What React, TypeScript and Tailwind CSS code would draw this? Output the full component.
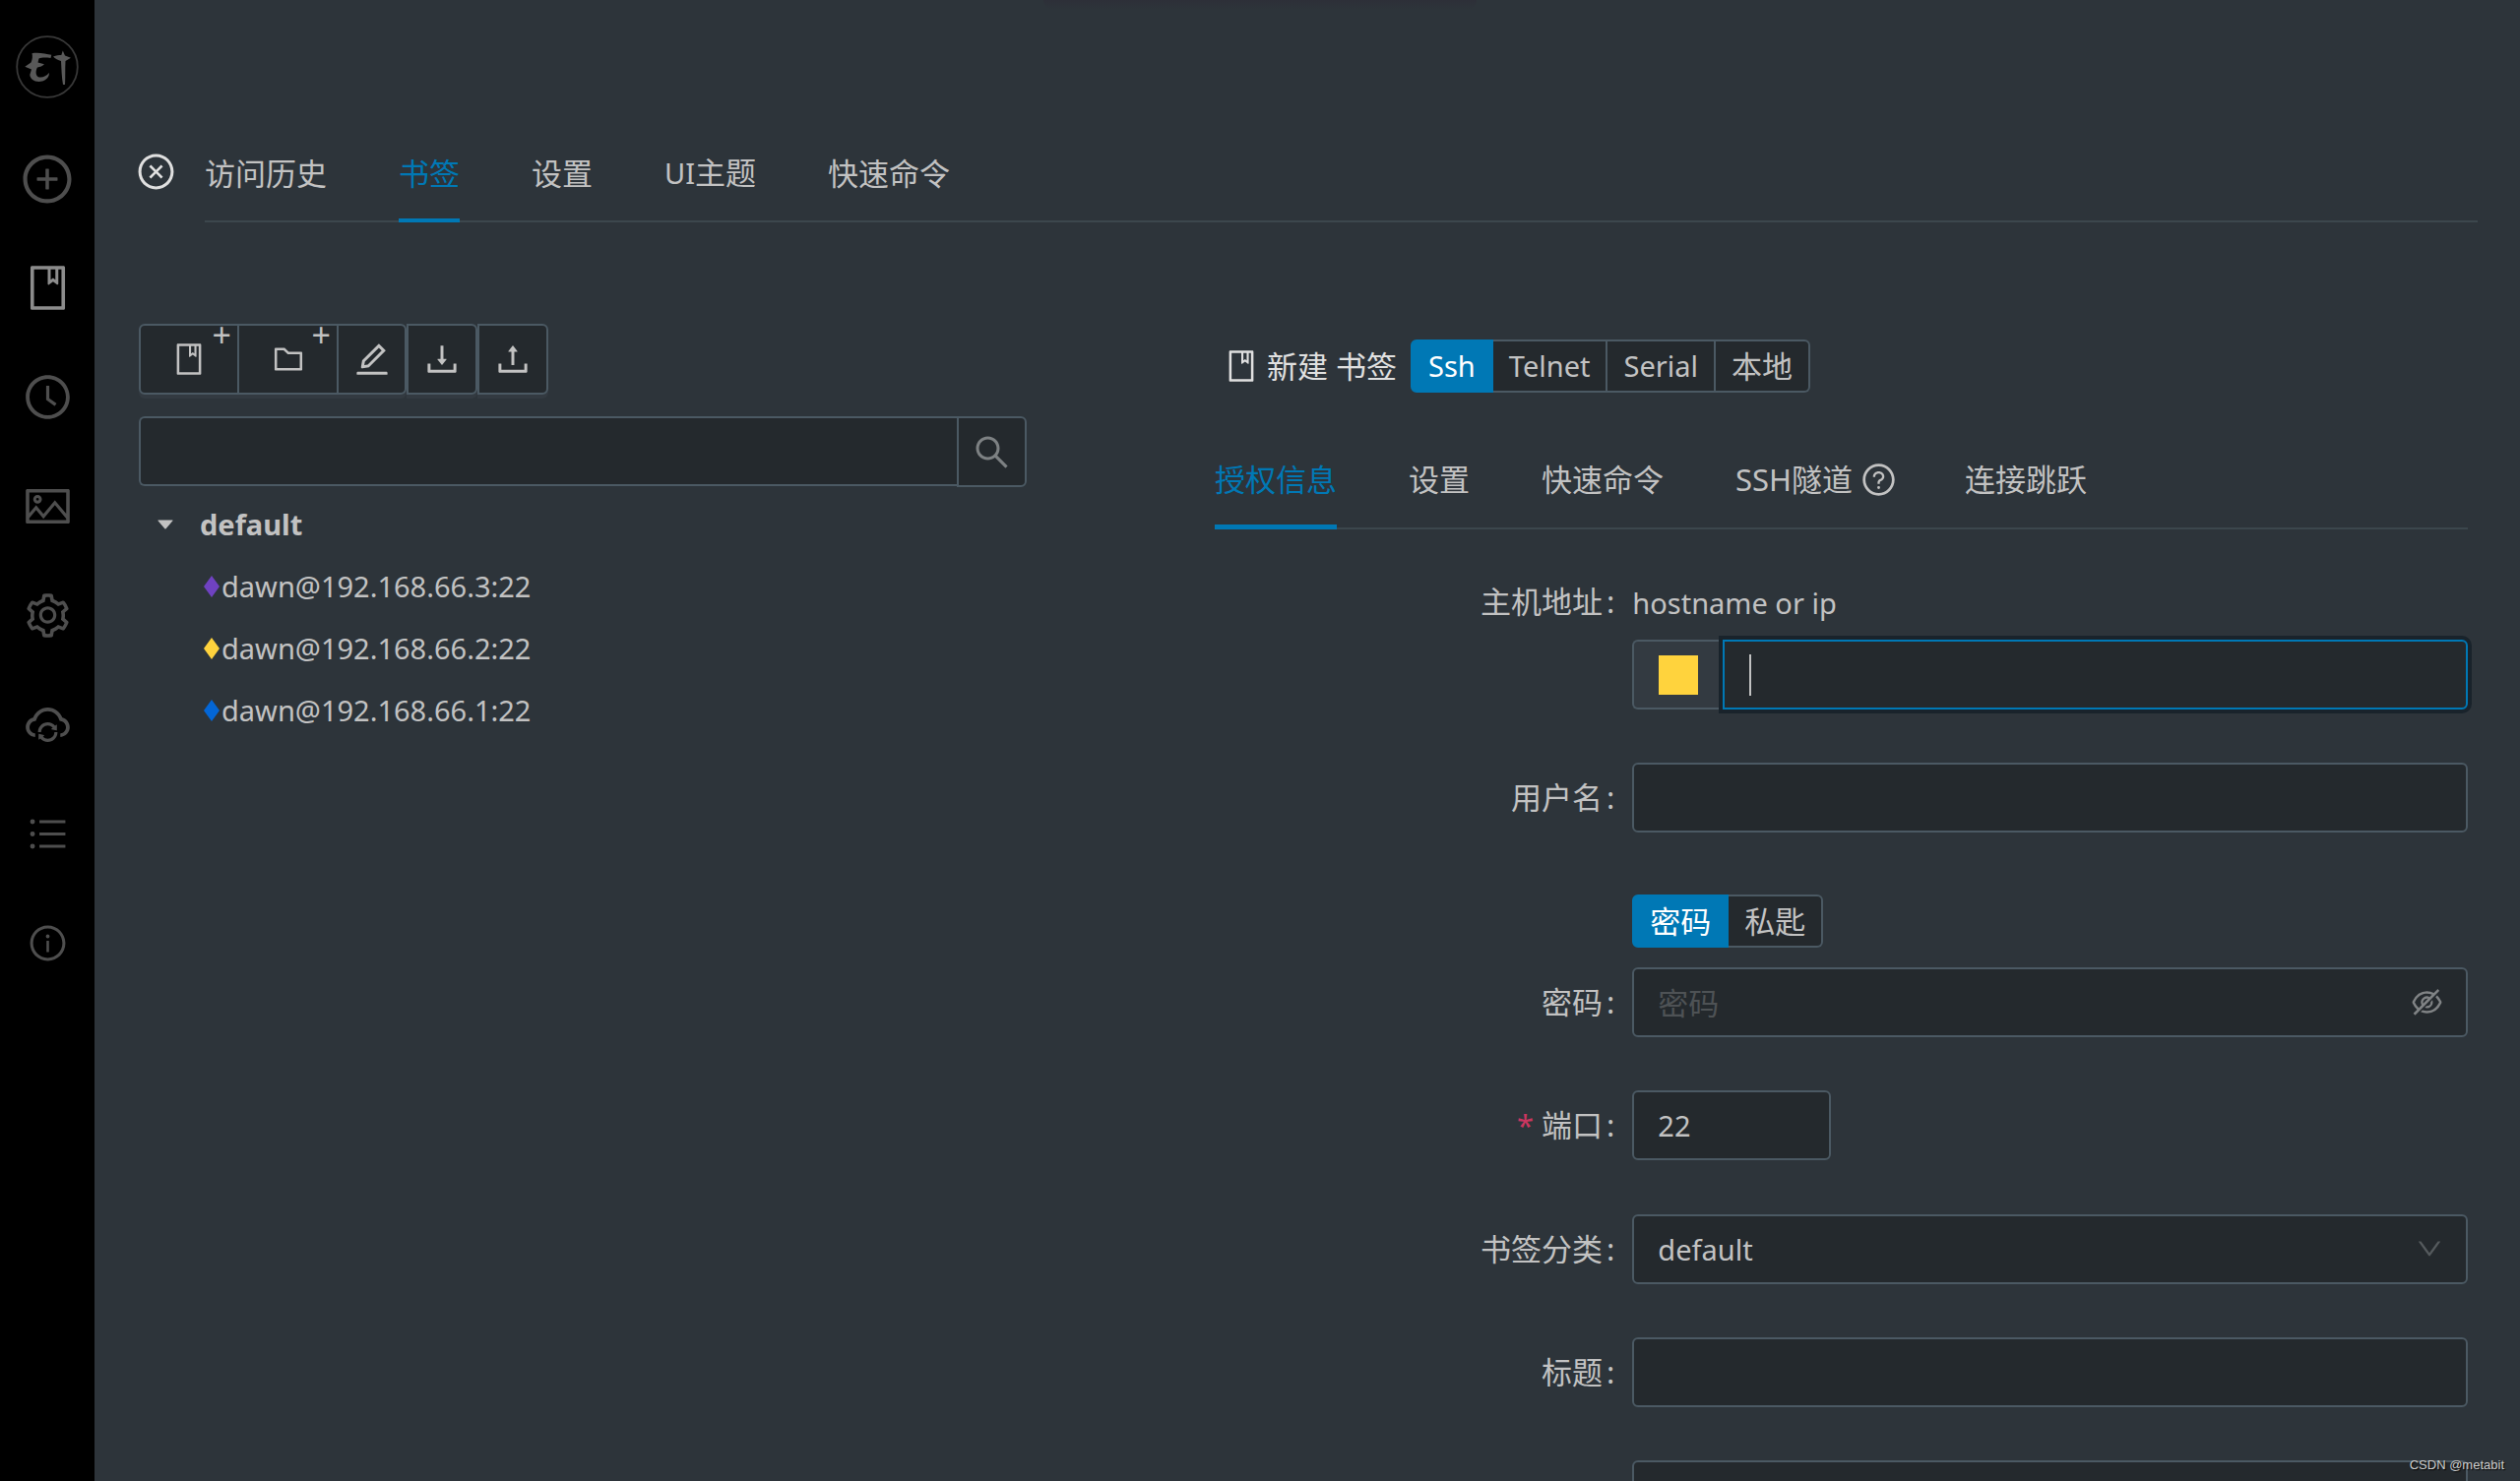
import type { ComponentType, ReactNode } from "react";
import {
  AiFillCaretDown,
  AiOutlineBook,
  AiOutlineClockCircle,
  AiOutlineCloseCircle,
  AiOutlineCloudSync,
  AiOutlineDown,
  AiOutlineDownload,
  AiOutlineEdit,
  AiOutlineEyeInvisible,
  AiOutlineFolder,
  AiOutlineInfoCircle,
  AiOutlinePicture,
  AiOutlinePlusCircle,
  AiOutlineQuestionCircle,
  AiOutlineSearch,
  AiOutlineSetting,
  AiOutlineUnorderedList,
  AiOutlineUpload,
} from "react-icons/ai";

type IconType = ComponentType<{ className?: string }>;

const field =
  "h-[71px] w-full rounded-md border-2 border-[#4b5963] bg-[#24292d] px-6 text-[#c2c2c2] outline-none placeholder:text-[#4e5255]";

function Logo() {
  return (
    <svg viewBox="0 0 64 64" className="size-16" aria-hidden="true">
      <circle cx="32" cy="32" r="30.8" fill="none" stroke="#383838" strokeWidth="1.8" />
      <path
        fill="#585858"
        d="M16.500 18.200 C22 16.800 31 18.500 36.300 19.800 L35.500 23 C30 22.300 26 22.500 23.500 23.500 L22.500 27.500 L29 29.200 C27 31 25 32 22 32.500 C20 36 20 40.500 23 42.300 C27 43.300 31 41.500 33.800 38 C34.500 41.500 31 45.500 27 46.500 C20 48 14.800 45 14.300 40 L16 34.500 L9.300 31.700 L15.500 27.500 C17 24 17.200 21 16.500 18.200 Z"
      />
      <path
        fill="#585858"
        d="M38 21.500 C41 20 44 20.200 46.300 20 L47.800 15.500 L50 20.500 L56 22.800 L50.500 26 C50 34 50.500 42 50 50 L48 50 C46.500 42 46.500 34 46 26 C43 25 40 24 38 21.500 Z"
      />
    </svg>
  );
}

const navItems: { label: string; icon: IconType; style: string }[] = [
  { label: "新建", icon: AiOutlinePlusCircle, style: "text-[56px] text-[#4e4e4e]" },
  { label: "书签", icon: AiOutlineBook, style: "text-[51px] text-[#8c8c8c]" },
  { label: "访问历史", icon: AiOutlineClockCircle, style: "text-[51px] text-[#4e4e4e]" },
  { label: "UI主题", icon: AiOutlinePicture, style: "text-[51px] text-[#4e4e4e]" },
  { label: "设置", icon: AiOutlineSetting, style: "text-[51px] text-[#4e4e4e]" },
  { label: "同步", icon: AiOutlineCloudSync, style: "text-[51px] text-[#4e4e4e]" },
  { label: "批量操作", icon: AiOutlineUnorderedList, style: "text-[45px] text-[#4e4e4e]" },
  { label: "关于", icon: AiOutlineInfoCircle, style: "text-[41px] text-[#4e4e4e]" },
];

function Sidebar() {
  return (
    <nav className="flex w-24 shrink-0 flex-col items-center bg-black pt-9">
      <button type="button" aria-label="electerm" className="mb-[26px]">
        <Logo />
      </button>
      {navItems.map(({ label, icon: Icon, style }) => (
        <button
          key={label}
          type="button"
          aria-label={label}
          className="flex h-[111px] w-full items-center justify-center"
        >
          <Icon className={style} />
        </button>
      ))}
    </nav>
  );
}

function Tabs({ items, active, bar }: { items: ReactNode[]; active: number; bar: string }) {
  return (
    <div role="tablist" className="flex gap-[73px] border-b-2 border-[#3c474d] text-[31px] leading-[48px]">
      {items.map((item, i) => (
        <button
          key={i}
          type="button"
          role="tab"
          aria-selected={i === active}
          className={`-mb-0.5 flex items-center whitespace-nowrap pb-[22px] pt-6 ${bar} ${
            i === active ? "border-[#0078b5] text-[#0078b5]" : "border-transparent text-[#c2c2c2]"
          }`}
        >
          {item}
        </button>
      ))}
    </div>
  );
}

function RadioGroup({ name, options }: { name: string; options: string[] }) {
  return (
    <div role="radiogroup" className="flex h-[54px]">
      {options.map((option, i) => (
        <label
          key={option}
          className={`flex cursor-pointer items-center border-y-2 border-r-2 border-[#4b5963] bg-[#24292d] px-4 text-[#c2c2c2] first:rounded-l-md first:border-l-2 last:rounded-r-md has-checked:border-[#0078b5] has-checked:bg-[#0078b5] has-checked:text-white ${
            /^[A-Z]/.test(option) ? "text-[29px]" : "text-[31px]"
          }`}
        >
          <input type="radio" name={name} defaultChecked={i === 0} className="sr-only" />
          {option}
        </label>
      ))}
    </div>
  );
}

const toolButton =
  "flex h-[72px] items-center justify-center border-2 border-[#4b5963] bg-[#24292d] text-[#c2c2c2] shadow-[0_4px_0_#333a41]";

function Toolbar() {
  return (
    <div className="flex">
      <button type="button" aria-label="新建书签" className={`${toolButton} relative w-[102px] rounded-l-md`}>
        <AiOutlineBook className="text-[36px]" />
        <span className="absolute right-1.5 top-0 text-[34px] leading-[18px]">+</span>
      </button>
      <button type="button" aria-label="新建文件夹" className={`${toolButton} relative -ml-0.5 w-[103px]`}>
        <AiOutlineFolder className="text-[36px]" />
        <span className="absolute right-1.5 top-0 text-[34px] leading-[18px]">+</span>
      </button>
      <button type="button" aria-label="编辑" className={`${toolButton} -ml-0.5 w-[71px] rounded-r-md`}>
        <AiOutlineEdit className="text-[40px]" />
      </button>
      <button type="button" aria-label="导出" className={`${toolButton} w-[72px] rounded-r-md`}>
        <AiOutlineDownload className="text-[40px]" />
      </button>
      <button type="button" aria-label="导入" className={`${toolButton} w-[72px] rounded-r-md`}>
        <AiOutlineUpload className="text-[40px]" />
      </button>
    </div>
  );
}

const hosts = [
  { name: "dawn@192.168.66.3:22", color: "text-[#6f42c1]" },
  { name: "dawn@192.168.66.2:22", color: "text-[#ffd33d]" },
  { name: "dawn@192.168.66.1:22", color: "text-[#0366d6]" },
];

function BookmarkTree() {
  return (
    <ul className="mt-1.5 text-[29px] leading-[63px] text-[#c2c2c2]">
      <li>
        <button type="button" className="flex items-center font-bold">
          <AiFillCaretDown className="mx-4 text-[22px]" />
          <span className="ml-2">default</span>
        </button>
        <ul>
          {hosts.map((host) => (
            <li key={host.name}>
              <a href="#" className="flex items-center pl-[66px]">
                <svg viewBox="0 0 16 22" className={`h-[22px] w-4 ${host.color}`} aria-hidden="true">
                  <path d="M8 0L16 11L8 22L0 11Z" fill="currentColor" />
                </svg>
                <span className="ml-0.5">{host.name}</span>
              </a>
            </li>
          ))}
        </ul>
      </li>
    </ul>
  );
}

function Row({
  id,
  label,
  required,
  className = "",
  children,
}: {
  id: string;
  label: string;
  required?: boolean;
  className?: string;
  children: ReactNode;
}) {
  return (
    <div className={`grid grid-cols-[1fr_2fr] ${className}`}>
      <label
        htmlFor={id}
        className="flex h-[71px] items-center justify-end pr-[18px] text-[31px] text-[#c2c2c2]"
      >
        {required && <span className="mr-2 text-[31px] text-[#cb3660]">*</span>}
        {label}
        <span className="ml-1">:</span>
      </label>
      {children}
    </div>
  );
}

function BookmarkForm() {
  return (
    <form>
      <Row id="host" label="主机地址" className="mt-[38px]">
        <div>
          <div className="flex h-[74px] items-center text-[29px] text-[#c2c2c2]">hostname or ip</div>
          <div className="flex">
            <button
              type="button"
              aria-label="颜色"
              className="flex h-[71px] w-[92px] items-center justify-center rounded-l-md border-2 border-r-0 border-[#4b5963] bg-[#333a41]"
            >
              <span className="size-10 bg-[#ffd33d]" />
            </button>
            <div className="flex h-[71px] flex-1 items-center rounded-r-md border-2 border-[#0078b5] bg-[#24292d] pl-[25px] shadow-[0_0_0_4px_#19232b]">
              <span className="h-[42px] w-0.5 bg-[#c2c2c2]" />
              <input
                id="host"
                type="text"
                className="h-full min-w-0 flex-1 bg-transparent px-2 text-[29px] text-[#c2c2c2] outline-none"
              />
            </div>
          </div>
        </div>
      </Row>
      <Row id="user" label="用户名" className="mt-[54px]">
        <input id="user" type="text" className={`${field} text-[29px]`} />
      </Row>
      <div className="mt-[63px] grid grid-cols-[1fr_2fr]">
        <div className="col-start-2">
          <RadioGroup name="auth" options={["密码", "私匙"]} />
        </div>
      </div>
      <Row id="password" label="密码" className="mt-5">
        <div className="relative">
          <input id="password" type="password" placeholder="密码" className={`${field} text-[31px]`} />
          <button
            type="button"
            aria-label="显示密码"
            className="absolute inset-y-0 right-6 flex items-center text-[35px] text-[#808385]"
          >
            <AiOutlineEyeInvisible />
          </button>
        </div>
      </Row>
      <Row id="port" label="端口" required className="mt-[54px]">
        <input id="port" type="text" defaultValue="22" className={`${field} max-w-[202px] text-[29px]`} />
      </Row>
      <Row id="category" label="书签分类" className="mt-[55px]">
        <div className="relative">
          <select id="category" className={`${field} appearance-none text-[29px]`}>
            <option>default</option>
          </select>
          <AiOutlineDown className="pointer-events-none absolute right-6 top-5 text-[30px] text-[#555a5d]" />
        </div>
      </Row>
      <Row id="title" label="标题" className="mt-[54px]">
        <input id="title" type="text" className={`${field} text-[29px]`} />
      </Row>
      <div className="mt-[54px] grid grid-cols-[1fr_2fr]">
        <textarea aria-label="描述" className={`${field} col-start-2 resize-none text-[29px]`} />
      </div>
    </form>
  );
}

export default function App() {
  return (
    <div className="relative flex h-screen overflow-hidden bg-[#2d343a] font-['Noto_Sans','Noto_Sans_CJK_SC',sans-serif]">
      <Sidebar />
      <main className="flex min-w-0 flex-1 flex-col pl-[42px] pt-[127px]">
        <header className="flex pr-[43px]">
          <button type="button" aria-label="关闭" className="mr-[29px] mt-[27px] h-[41px] text-[41px] text-[#e0e0e0]">
            <AiOutlineCloseCircle />
          </button>
          <div className="min-w-0 flex-1">
            <Tabs
              items={[
                "访问历史",
                "书签",
                "设置",
                <span key="theme">
                  <span className="text-[29px]">UI</span>主题
                </span>,
                "快速命令",
              ]}
              active={1}
              bar="border-b-4"
            />
          </div>
        </header>
        <div className="mt-[103px] flex min-h-0 flex-1 pl-[3px]">
          <section className="w-[902px] shrink-0">
            <Toolbar />
            <div className="mt-[22px] flex">
              <input
                type="text"
                aria-label="搜索"
                className="h-[71px] min-w-0 flex-1 rounded-l-md border-2 border-r-0 border-[#4b5963] bg-[#24292d] px-6 text-[29px] text-[#c2c2c2] outline-none"
              />
              <button
                type="button"
                aria-label="搜索"
                className="flex h-[72px] w-[71px] items-center justify-center rounded-r-md border-2 border-[#4b5963] bg-[#24292d] text-[41px] text-[#7d8183]"
              >
                <AiOutlineSearch />
              </button>
            </div>
            <BookmarkTree />
          </section>
          <section className="ml-[191px] min-w-0 flex-1 pr-[53px] pt-4">
            <div className="flex items-center pl-[9px] text-[31px] text-[#e0e0e0]">
              <AiOutlineBook className="text-[36px]" />
              <h2 className="ml-2 mr-3.5">新建 书签</h2>
              <RadioGroup name="type" options={["Ssh", "Telnet", "Serial", "本地"]} />
            </div>
            <div className="mt-10">
              <Tabs
                items={[
                  "授权信息",
                  "设置",
                  "快速命令",
                  <span className="-mr-1 flex items-center" key="tunnel">
                    SSH隧道
                    <AiOutlineQuestionCircle className="ml-2 text-[37px]" />
                  </span>,
                  "连接跳跃",
                ]}
                active={0}
                bar="border-b-[5px]"
              />
            </div>
            <BookmarkForm />
          </section>
        </div>
      </main>
      <div className="pointer-events-none absolute inset-x-0 top-0 mx-auto h-2.5 w-[440px] rounded-b-full bg-linear-to-b from-[#2d2f38] to-transparent" />
      <div className="pointer-events-none absolute bottom-1.5 right-4 font-['Liberation_Sans',sans-serif] text-[13px] leading-5 text-[#d0d0d0] text-shadow-[1px_1px_1px_#000]">
        CSDN @metabit
      </div>
    </div>
  );
}
